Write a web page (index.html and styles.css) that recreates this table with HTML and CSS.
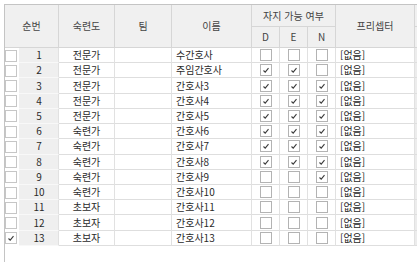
FILE: index.html
```html
<!DOCTYPE html>
<html lang="ko">
<head>
<meta charset="utf-8">
<link rel="stylesheet" href="styles.css">
</head>
<body>
<div class="frame">
  <div class="grid">
    <div class="hc h-num">순번</div>
    <div class="hc h-skill">숙련도</div>
    <div class="hc h-team">팀</div>
    <div class="hc h-name">이름</div>
    <div class="hc h-group">자지 가능 여부</div>
    <div class="hc h-pre">프리셉터</div>
    <div class="hc h-x1"></div>
    <div class="hc h-d">D</div>
    <div class="hc h-e">E</div>
    <div class="hc h-n">N</div>
    <div class="hc h-x2"></div>

    <div class="c chk"><span class="box rb"></span></div><div class="c num">1</div><div class="c mid">전문가</div><div class="c"></div><div class="c left">수간호사</div><div class="c ck"><span class="box"></span></div><div class="c ck"><span class="box"></span></div><div class="c ck"><span class="box"></span></div><div class="c left">[없음]</div><div class="c x"></div>

    <div class="c chk"><span class="box rb"></span></div><div class="c num">2</div><div class="c mid">전문가</div><div class="c"></div><div class="c left">주임간호사</div><div class="c ck"><span class="box"><svg viewBox="0 0 12 12"><polyline points="3.5,6.5 5.2,8.2 8.5,4.2"/></svg></span></div><div class="c ck"><span class="box"><svg viewBox="0 0 12 12"><polyline points="3.5,6.5 5.2,8.2 8.5,4.2"/></svg></span></div><div class="c ck"><span class="box"></span></div><div class="c left">[없음]</div><div class="c x"></div>

    <div class="c chk"><span class="box rb"></span></div><div class="c num">3</div><div class="c mid">전문가</div><div class="c"></div><div class="c left">간호사3</div><div class="c ck"><span class="box"><svg viewBox="0 0 12 12"><polyline points="3.5,6.5 5.2,8.2 8.5,4.2"/></svg></span></div><div class="c ck"><span class="box"><svg viewBox="0 0 12 12"><polyline points="3.5,6.5 5.2,8.2 8.5,4.2"/></svg></span></div><div class="c ck"><span class="box"><svg viewBox="0 0 12 12"><polyline points="3.5,6.5 5.2,8.2 8.5,4.2"/></svg></span></div><div class="c left">[없음]</div><div class="c x"></div>

    <div class="c chk"><span class="box rb"></span></div><div class="c num">4</div><div class="c mid">전문가</div><div class="c"></div><div class="c left">간호사4</div><div class="c ck"><span class="box"><svg viewBox="0 0 12 12"><polyline points="3.5,6.5 5.2,8.2 8.5,4.2"/></svg></span></div><div class="c ck"><span class="box"><svg viewBox="0 0 12 12"><polyline points="3.5,6.5 5.2,8.2 8.5,4.2"/></svg></span></div><div class="c ck"><span class="box"><svg viewBox="0 0 12 12"><polyline points="3.5,6.5 5.2,8.2 8.5,4.2"/></svg></span></div><div class="c left">[없음]</div><div class="c x"></div>

    <div class="c chk"><span class="box rb"></span></div><div class="c num">5</div><div class="c mid">전문가</div><div class="c"></div><div class="c left">간호사5</div><div class="c ck"><span class="box"><svg viewBox="0 0 12 12"><polyline points="3.5,6.5 5.2,8.2 8.5,4.2"/></svg></span></div><div class="c ck"><span class="box"><svg viewBox="0 0 12 12"><polyline points="3.5,6.5 5.2,8.2 8.5,4.2"/></svg></span></div><div class="c ck"><span class="box"><svg viewBox="0 0 12 12"><polyline points="3.5,6.5 5.2,8.2 8.5,4.2"/></svg></span></div><div class="c left">[없음]</div><div class="c x"></div>

    <div class="c chk"><span class="box rb"></span></div><div class="c num">6</div><div class="c mid">숙련가</div><div class="c"></div><div class="c left">간호사6</div><div class="c ck"><span class="box"><svg viewBox="0 0 12 12"><polyline points="3.5,6.5 5.2,8.2 8.5,4.2"/></svg></span></div><div class="c ck"><span class="box"><svg viewBox="0 0 12 12"><polyline points="3.5,6.5 5.2,8.2 8.5,4.2"/></svg></span></div><div class="c ck"><span class="box"><svg viewBox="0 0 12 12"><polyline points="3.5,6.5 5.2,8.2 8.5,4.2"/></svg></span></div><div class="c left">[없음]</div><div class="c x"></div>

    <div class="c chk"><span class="box rb"></span></div><div class="c num">7</div><div class="c mid">숙련가</div><div class="c"></div><div class="c left">간호사7</div><div class="c ck"><span class="box"><svg viewBox="0 0 12 12"><polyline points="3.5,6.5 5.2,8.2 8.5,4.2"/></svg></span></div><div class="c ck"><span class="box"><svg viewBox="0 0 12 12"><polyline points="3.5,6.5 5.2,8.2 8.5,4.2"/></svg></span></div><div class="c ck"><span class="box"><svg viewBox="0 0 12 12"><polyline points="3.5,6.5 5.2,8.2 8.5,4.2"/></svg></span></div><div class="c left">[없음]</div><div class="c x"></div>

    <div class="c chk"><span class="box rb"></span></div><div class="c num">8</div><div class="c mid">숙련가</div><div class="c"></div><div class="c left">간호사8</div><div class="c ck"><span class="box"><svg viewBox="0 0 12 12"><polyline points="3.5,6.5 5.2,8.2 8.5,4.2"/></svg></span></div><div class="c ck"><span class="box"><svg viewBox="0 0 12 12"><polyline points="3.5,6.5 5.2,8.2 8.5,4.2"/></svg></span></div><div class="c ck"><span class="box"><svg viewBox="0 0 12 12"><polyline points="3.5,6.5 5.2,8.2 8.5,4.2"/></svg></span></div><div class="c left">[없음]</div><div class="c x"></div>

    <div class="c chk"><span class="box rb"></span></div><div class="c num">9</div><div class="c mid">숙련가</div><div class="c"></div><div class="c left">간호사9</div><div class="c ck"><span class="box"></span></div><div class="c ck"><span class="box"></span></div><div class="c ck"><span class="box"><svg viewBox="0 0 12 12"><polyline points="3.5,6.5 5.2,8.2 8.5,4.2"/></svg></span></div><div class="c left">[없음]</div><div class="c x"></div>

    <div class="c chk"><span class="box rb"></span></div><div class="c num">10</div><div class="c mid">숙련가</div><div class="c"></div><div class="c left">간호사10</div><div class="c ck"><span class="box"></span></div><div class="c ck"><span class="box"></span></div><div class="c ck"><span class="box"></span></div><div class="c left">[없음]</div><div class="c x"></div>

    <div class="c chk"><span class="box rb"></span></div><div class="c num">11</div><div class="c mid">초보자</div><div class="c"></div><div class="c left">간호사11</div><div class="c ck"><span class="box"></span></div><div class="c ck"><span class="box"></span></div><div class="c ck"><span class="box"></span></div><div class="c left">[없음]</div><div class="c x"></div>

    <div class="c chk"><span class="box rb"></span></div><div class="c num">12</div><div class="c mid">초보자</div><div class="c"></div><div class="c left">간호사12</div><div class="c ck"><span class="box"></span></div><div class="c ck"><span class="box"></span></div><div class="c ck"><span class="box"></span></div><div class="c left">[없음]</div><div class="c x"></div>

    <div class="c chk"><span class="box rb"><svg viewBox="0 0 12 12"><polyline points="3.5,6.5 5.2,8.2 8.5,4.2"/></svg></span></div><div class="c num">13</div><div class="c mid">초보자</div><div class="c"></div><div class="c left">간호사13</div><div class="c ck"><span class="box"></span></div><div class="c ck"><span class="box"></span></div><div class="c ck"><span class="box"></span></div><div class="c left">[없음]</div><div class="c x"></div>
  </div>
</div>
</body>
</html>
```
FILE: styles.css
```css
html, body {
  margin: 0;
  padding: 0;
  background: #ffffff;
}
body {
  font-family: "Noto Sans CJK KR", "Noto Sans", sans-serif;
  font-size: 10px;
  color: #2a2a2a;
}
.frame {
  margin: 4px 0 0 4px;
  height: 258px;
  border-left: 1px solid #c4c4c4;
  border-top: 1px solid #c4c4c4;
  box-sizing: border-box;
  background: #ffffff;
}
.grid {
  display: grid;
  grid-template-columns: 14px 40px 56px 57px 80px 28px 28px 28px 79px 2px;
  grid-template-rows: 22px 21px repeat(13, 15.23px);
}
.hc {
  background: #f0f0f0;
  color: #444;
  border-right: 1px solid #d6d6d6;
  border-bottom: 1px solid #d6d6d6;
  box-sizing: border-box;
  display: flex;
  align-items: center;
  justify-content: center;
  line-height: 1;
}
.h-num { grid-column: 1 / 3; grid-row: 1 / 3; }
.h-skill { grid-column: 3; grid-row: 1 / 3; }
.h-team { grid-column: 4; grid-row: 1 / 3; }
.h-name { grid-column: 5; grid-row: 1 / 3; }
.h-group { grid-column: 6 / 9; grid-row: 1; }
.h-pre { grid-column: 9; grid-row: 1 / 3; }
.h-x1 { grid-column: 10; grid-row: 1; border-right: none; }
.h-d { grid-column: 6; grid-row: 2; }
.h-e { grid-column: 7; grid-row: 2; }
.h-n { grid-column: 8; grid-row: 2; }
.h-x2 { grid-column: 10; grid-row: 2; border-right: none; }

.c {
  border-right: 1px solid #e1e1e1;
  border-bottom: 1px solid #dedede;
  box-sizing: border-box;
  display: flex;
  align-items: center;
  line-height: 1;
  white-space: nowrap;
  overflow: hidden;
}
.chk {
  border-right: none;
  border-bottom: none;
  align-items: center;
}
.num {
  background: #efefef;
  justify-content: center;
  border-bottom-color: #f8f8f8;
  padding-left: 1px;
}
.mid { justify-content: center; }
.left { padding-left: 4px; }
.ck { justify-content: center; }
.x { background: #ececec; border-right: none; }

.box {
  width: 12px;
  height: 12px;
  box-sizing: border-box;
  border: 1px solid #b3b3b3;
  background: #ffffff;
  display: block;
  position: relative;
}
.box.rb { border-color: #c6c6c6; }
.box svg {
  position: absolute;
  left: -1px;
  top: -1px;
  width: 12px;
  height: 12px;
}
.box polyline {
  fill: none;
  stroke: #3c3c3c;
  stroke-width: 1.1;
}
```
